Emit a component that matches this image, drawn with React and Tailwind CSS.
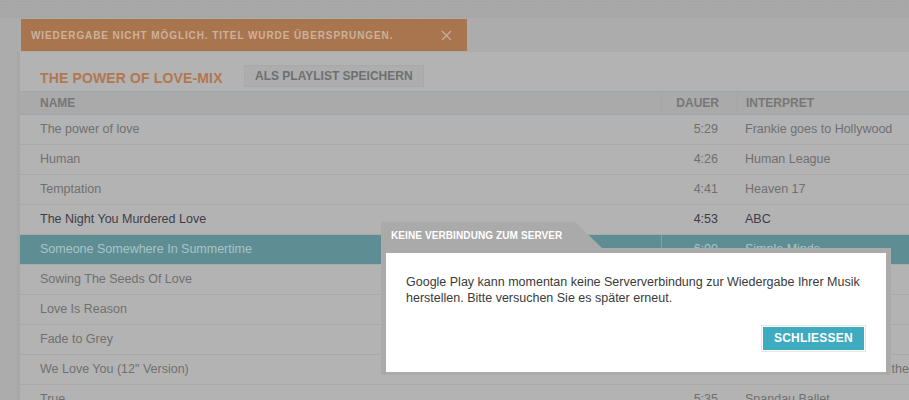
import React from 'react';

const tracks = [
  { title: 'The power of love', time: '5:29', artist: 'Frankie goes to Hollywood' },
  { title: 'Human', time: '4:26', artist: 'Human League' },
  { title: 'Temptation', time: '4:41', artist: 'Heaven 17' },
  { title: 'The Night You Murdered Love', time: '4:53', artist: 'ABC', played: true },
  { title: 'Someone Somewhere In Summertime', time: '6:00', artist: 'Simple Minds', active: true },
  { title: 'Sowing The Seeds Of Love', time: '6:19', artist: 'Tears for Fears' },
  { title: 'Love Is Reason', time: '3:31', artist: 'Alphaville' },
  { title: 'Fade to Grey', time: '3:49', artist: 'Visage' },
  { title: 'We Love You (12" Version)', time: '4:30', artist: 'Orchestral Manoeuvres in the Dark' },
  { title: 'True', time: '5:35', artist: 'Spandau Ballet' },
];

function TrackRow({ track }) {
  const text = track.active ? 'text-[#a8c4c7]' : track.played ? 'text-[#3d3d48]' : 'text-[#707070]';
  return (
    <div
      className={`grid grid-cols-[641px_76px_1fr] h-[30px] items-center border-b border-[#a9a9a9] text-[12.5px] whitespace-nowrap ${
        track.active ? 'bg-[#5e8e94]' : ''
      } ${text}`}
    >
      <div className="pl-5">{track.title}</div>
      <div className={`h-full flex items-center justify-end pr-[19px] border-l ${track.active ? 'border-[#7fa2a7]' : 'border-transparent'}`}>
        {track.time}
      </div>
      <div className="pl-2">{track.artist}</div>
    </div>
  );
}

function ErrorDialog() {
  return (
    <div className="absolute left-[381px] top-[222px] w-[510px]">
      <div className="w-[221px] h-[26px] bg-[#aaaaaa] [clip-path:polygon(0_0,194px_0,100%_100%,0_100%)] flex items-center pl-[10px] pt-px">
        <span className="text-white font-bold text-[10px] tracking-[0.01em]">KEINE VERBINDUNG ZUM SERVER</span>
      </div>
      <div className="bg-[#aaaaaa] px-[5px] pt-[5px] pb-[3px]">
        <div className="bg-white h-[119px] px-5 pt-[21px] flex flex-col">
          <p className="text-[12.5px] leading-4 text-[#3a3a3a]">
            Google Play kann momentan keine Serververbindung zur Wiedergabe Ihrer Musik herstellen. Bitte versuchen Sie es später erneut.
          </p>
          <div className="flex justify-end mt-[19px]">
            <button className="border border-[#e6e8e1] p-px">
              <span className="block bg-[#3eabc0] text-white font-bold text-[12px] tracking-[0.02em] h-[23px] leading-[23px] px-[11px]">
                SCHLIESSEN
              </span>
            </button>
          </div>
        </div>
      </div>
    </div>
  );
}

export default function App() {
  return (
    <div className="relative w-[909px] h-[400px] overflow-hidden bg-[#acacac] font-['Liberation_Sans',Arial,sans-serif]">
      {/* top bar */}
      <div className="h-[18px] bg-[#a8a8a8] bg-[radial-gradient(#a3a3a3_1px,transparent_1px)] bg-[length:3px_3px]" />

      {/* toast band */}
      <div className="h-[34px] pl-[21px] pt-px">
        <div className="w-[446px] h-[32px] bg-[#a9754e] flex items-center justify-between pl-[10px] pr-[15px]">
          <span className="text-[#cdb19c] font-bold text-[10px] tracking-[0.09em]">
            WIEDERGABE NICHT MÖGLICH. TITEL WURDE ÜBERSPRUNGEN.
          </span>
          <svg width="11" height="11" viewBox="0 0 11 11" className="text-[#c9ab95]">
            <path d="M1 1L10 10M10 1L1 10" stroke="currentColor" strokeWidth="1.4" />
          </svg>
        </div>
      </div>

      <div className="flex h-full">
        <div className="w-[17px] shrink-0 bg-[#acacac] border-r-[3px] border-[#a7a7a7] box-content" />
        <div className="flex-1 min-w-0 bg-[#b3b3b3]">
          <div className="h-[39px] pt-[13px] pl-5 flex items-start">
            <h1 className="w-[204px] text-[14px] font-bold tracking-[0.01em] text-[#b27750] leading-[22px] mt-[2px]">THE POWER OF LOVE-MIX</h1>
            <button className="h-[22px] px-[10px] bg-[#adadad] border border-[#a8a8a8] text-[12px] font-bold text-[#6d7071]">
              ALS PLAYLIST SPEICHERN
            </button>
          </div>

          <div className="grid grid-cols-[641px_76px_1fr] h-[24px] items-center border-y border-[#9ea8ac] bg-[#aaaaaa] text-[12px] font-bold text-[#777777]">
            <div className="pl-5">NAME</div>
            <div className="h-full flex items-center justify-end pr-[18px] border-l border-[#9ea8ac]">DAUER</div>
            <div className="h-full flex items-center pl-2 border-l border-[#9ea8ac]">INTERPRET</div>
          </div>

          {tracks.map((t) => (
            <TrackRow key={t.title} track={t} />
          ))}
        </div>
      </div>

      <ErrorDialog />
    </div>
  );
}
